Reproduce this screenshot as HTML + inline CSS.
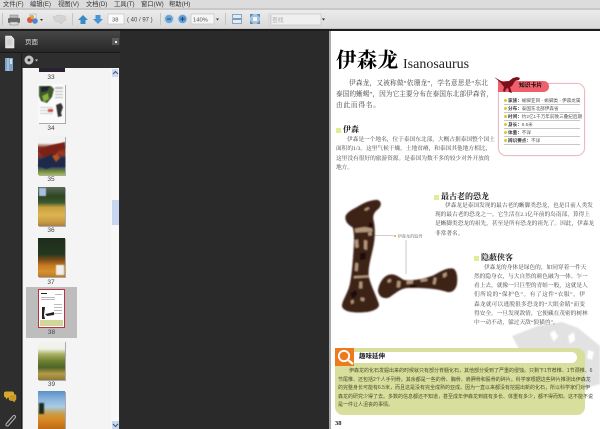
<!DOCTYPE html>
<html lang="zh"><head><meta charset="utf-8"><title>伊森龙</title>
<style>
html,body{margin:0;padding:0;background:#2a2a2a}
#r{position:relative;width:600px;height:429px;overflow:hidden;background:#2a2a2a;font-family:"Liberation Sans","Noto Sans CJK SC",sans-serif}
#r div,#r svg{position:absolute}
.m{top:0;height:9px;line-height:9px;font-size:6.3px;color:#333;white-space:nowrap;filter:blur(.3px)}
.t{white-space:nowrap;text-align:justify;text-align-last:justify;font-family:"Liberation Serif","Noto Serif CJK SC",serif;color:#444;filter:blur(.3px)}
.b{font-size:5.7px;height:8px;line-height:8px}
.h{font-family:"Liberation Serif","Noto Serif CJK SC",serif;font-weight:700;color:#222;white-space:nowrap;font-size:8px;line-height:10px;filter:blur(.25px)}
.q{width:5px;height:5px;background:#e2ec96}
.n{left:23px;width:56px;text-align:center;font-size:6.5px;line-height:8px;color:#444;filter:blur(.25px)}
.th{left:38px;width:27px;height:39px;box-shadow:1px 1px 0 #aaa;filter:blur(.35px)}
.c{left:504px;width:76px;height:7px;line-height:7px;font-size:4.6px;color:#555;white-space:nowrap;border-bottom:1px solid #c8c8c8;filter:blur(.25px)}
.c b{color:#333}.c i{display:inline-block;width:2.5px;height:2.5px;border-radius:2px;background:#d8c830;margin:0 1.5px 1px 0;vertical-align:middle}
.g{left:338px;width:240px;height:8px;line-height:8px;font-size:5px;color:#484c2c;white-space:nowrap;text-align:justify;text-align-last:justify;filter:blur(.3px)}
</style></head><body><div id="r">

<!-- menu + toolbar -->
<div style="left:0;top:0;width:600px;height:9px;background:#dcdcdc"></div>
<div style="left:0;top:8px;width:600px;height:2px;background:#c8c8c8"></div>
<div style="left:0;top:10px;width:600px;height:18px;background:linear-gradient(#ececec,#dadada)"></div>
<div style="left:0;top:28px;width:600px;height:1px;background:#c4c4c4"></div>
<div style="left:0;top:29px;width:600px;height:2px;background:#1c1c1c"></div>
<div class="m" style="left:3px">文件(F)</div><div class="m" style="left:30px">编辑(E)</div><div class="m" style="left:58px">视图(V)</div><div class="m" style="left:86px">文档(D)</div><div class="m" style="left:114px">工具(T)</div><div class="m" style="left:141px">窗口(W)</div><div class="m" style="left:169px">帮助(H)</div>

<svg style="left:0;top:10px;filter:blur(.3px)" width="340" height="18" viewBox="0 0 340 18">
 <g fill="#c4c4c4"><rect x="2" y="3" width="1" height="12"/><rect x="72" y="3" width="1" height="12"/><rect x="160" y="3" width="1" height="12"/><rect x="225" y="3" width="1" height="12"/></g>
 <rect x="10" y="5" width="8" height="3" fill="#bbb" stroke="#777" stroke-width=".5"/><rect x="8" y="8" width="12" height="5" rx="1" fill="#6a6a6a"/><rect x="10" y="12" width="8" height="3" fill="#ddd" stroke="#777" stroke-width=".5"/>
 <rect x="30" y="4" width="6" height="7" fill="#eee" stroke="#999" stroke-width=".5"/><circle cx="30" cy="10" r="3" fill="#d9553f"/><circle cx="35" cy="11" r="2.8" fill="#4e86c8"/><circle cx="32" cy="7" r="2" fill="#e8a13c"/><path d="M40 9h3l-1.500 2z" fill="#333"/>
 <path d="M53 7l5-2 7 1 1 4-4 2v2l-3-2-4-1z" fill="#d4d4d4" stroke="#c2c2c2" stroke-width=".6"/>
 <path d="M83 5l5 5h-2.500v4h-5v-4H78z" fill="#3a8ac8"/><path d="M98 14l-5-5h2.500V5h5v4h2.500z" fill="#4a95d2"/>
 <rect x="108" y="4" width="16" height="10" fill="#fafafa" stroke="#c4c4c4" stroke-width=".7"/>
 <text x="112" y="11.500" font-size="5.800" fill="#555" font-family="Liberation Sans">38</text>
 <text x="127" y="11.500" font-size="6" fill="#444" font-family="Liberation Sans">( 40 / 97 )</text>
 <circle cx="169" cy="9" r="4.500" fill="#6aa5da" stroke="#c4d8ea"/><rect x="167" y="8.500" width="4" height="1" fill="#345"/>
 <circle cx="182.500" cy="9" r="4.500" fill="#5a9ad6" stroke="#c4d8ea"/><rect x="180.500" y="8.500" width="4" height="1" fill="#345"/><rect x="182" y="7" width="1" height="4" fill="#345"/>
 <rect x="191" y="4" width="23" height="10" fill="#f6f6f6" stroke="#c4c4c4" stroke-width=".7"/>
 <text x="193" y="11.500" font-size="5.800" fill="#555" font-family="Liberation Sans">140%</text>
 <path d="M216 8.500h3l-1.500 2z" fill="#333"/>
 <rect x="232.500" y="4.500" width="9" height="9" fill="#e2eaf2" stroke="#86a6c4"/><rect x="233" y="8" width="8" height="2" fill="#7a9cc0"/>
 <rect x="250" y="4" width="10" height="10" fill="#a8c4dc"/><path d="M250 4l3.500 0-3.500 3.500zM260 4l-3.500 0 3.500 3.500zM250 14l3.500 0-3.500-3.500zM260 14l-3.500 0 3.500-3.500z" fill="#5a8cb8"/><rect x="253" y="7" width="4" height="4" fill="#f2f6fa"/>
 <rect x="269" y="4" width="52" height="11" fill="#efefef" stroke="#c4c4c4" stroke-width=".7"/><rect x="270" y="5" width="1.500" height="9" fill="#cfcfcf"/>
 <text x="272" y="12" font-size="5.800" fill="#aaa" font-family="Noto Sans CJK SC">查找</text>
 <path d="M322 8.500h3l-1.500 2z" fill="#222"/>
</svg>

<!-- left rail and panel -->
<div style="left:0;top:31px;width:120px;height:398px;background:#2e2e2e"></div>
<div style="left:0;top:31px;width:120px;height:21px;background:linear-gradient(#454545,#282828)"></div>
<div style="left:0;top:52px;width:120px;height:1px;background:#181818"></div>
<div style="left:21px;top:53px;width:1px;height:376px;background:#1a1a1a"></div>
<div style="left:25px;top:38px;font-size:6.500px;line-height:9px;color:#ddd;filter:blur(.25px)">页面</div>
<div style="left:112px;top:38px;width:7px;height:7px;background:#5a5a5a"></div>
<div style="left:115px;top:41px;width:2px;height:2px;background:#eee"></div>
<svg style="left:0;top:31px;filter:blur(.3px)" width="40" height="40" viewBox="0 0 40 40">
 <path d="M5.500 5h6l2.500 3v9h-8.500z" fill="#dcdcdc" stroke="#fff" stroke-width=".5"/><path d="M7 9h5M7 11h5M7 13h5" stroke="#aaa" stroke-width=".6"/>
 <path d="M5 27h8v13H5z" fill="#7fa4c8"/><path d="M8 27v13" stroke="#c0d6ea"/><path d="M10 28h2v5h-2z" fill="#cfe0ef"/>
 <circle cx="29" cy="29" r="4.500" fill="#c4c4c4"/><circle cx="29" cy="29" r="1.500" fill="#333"/><path d="M35 28.500h3l-1.500 2z" fill="#ccc"/>
</svg>
<svg style="left:0;top:388px;filter:blur(.3px)" width="24" height="41" viewBox="0 0 24 41">
 <path d="M4 5c0-1 1-1.500 2-1.500h6c1 0 2 .5 2 1.500v3c0 1-1 1.500-2 1.500H8l-2 2v-2c-1 0-2-.5-2-1.500z" fill="#d6a92c"/>
 <path d="M9 8c0-1 1-1.500 2-1.500h3.500c1 0 1.500 .5 1.500 1.500v3c0 1-.5 1.500-1.500 1.500v1.500l-2-1.500H11c-1 0-2-.5-2-1.500z" fill="#c89a20" stroke="#e8c860" stroke-width=".4"/>
 <path d="M7 35l6-7c1.500-1.500 3.500 .5 2 2l-6.500 7.500c-1 1-3 .5-2.500-1.500l6-7" fill="none" stroke="#b0b0b0" stroke-width="1"/>
</svg>

<!-- thumbnails list -->
<div style="left:22px;top:68px;width:1px;height:361px;background:#777"></div>
<div style="left:23px;top:68px;width:96px;height:361px;background:#f4f4f4"></div>
<div style="left:111px;top:68px;width:8px;height:361px;background:#f8f8f8"></div>
<div style="left:112px;top:69px;width:6px;height:8px;background:#cfdcf2"></div>
<div style="left:112px;top:200px;width:7px;height:25px;background:#c8d6f0"></div>
<div style="left:112px;top:421px;width:7px;height:8px;background:#c8d6ee"></div>
<svg style="left:112px;top:69px" width="7" height="8"><path d="M1 5l2.500-2.500L6 5" fill="none" stroke="#456" stroke-width="1"/></svg>
<svg style="left:112px;top:421px" width="7" height="8"><path d="M1 3l2.500 2.500L6 3" fill="none" stroke="#456" stroke-width="1"/></svg>
<div style="left:39px;top:68px;width:26px;height:4px;background:#2a2230"></div>
<div class="n" style="top:74px">33</div>

<div class="th" style="top:84px;background:#fafafa"></div>
<svg style="left:38px;top:84px;filter:blur(.4px)" width="27" height="39"><path d="M1 2h12l3 3-2 8-5 6-6-2-2-5z" fill="#3d5a2a"/><path d="M3 3l9-1-3 5-6 1z" fill="#223"/><path d="M4 12l6-3 1 6-5 3z" fill="#8ab040"/><path d="M17 3h8v2h-8zM17 7h8v1h-8zM17 10h8v1h-8zM17 13h8v1h-8z" fill="#bbb"/><path d="M2 23h13v1H2zM2 26h13v1H2zM2 29h13v1H2z" fill="#ccc"/><rect x="10" y="25" width="5" height="3" fill="#d05050"/><path d="M18 21l5-2 2 4-2 6 1 3-4 1z" fill="#333"/></svg>
<div class="n" style="top:125px">34</div>

<div class="th" style="top:136px;background:linear-gradient(#f2f2f2 0 18%,#7a2a1a 30%,#a03a20 45%,#2c3350 62%,#303a60 78%,#82a040 94%,#a4bc50)"></div>
<svg style="left:38px;top:136px;filter:blur(.5px)" width="27" height="39"><path d="M0 15l10-5 8-2 9-2v6l-7 3-6 8-6 1z" fill="#7a2218"/><path d="M6 22l8-4 6 4 7-1v10H14l-6 2-8-3 2-6z" fill="#1f2a4a"/><path d="M14 20l5-2 3 4-4 4z" fill="#b4531f"/></svg>
<div class="n" style="top:176px">35</div>

<div class="th" style="top:187px;background:linear-gradient(#5a6a58 0,#2d4420 24%,#3c5830 40%,#c8a040 52%,#dcb450 72%,#c89a40 90%,#a88040)"></div>
<div style="left:39px;top:188px;width:7px;height:8px;background:#a9bfe4;filter:blur(.5px)"></div>
<div class="n" style="top:227px">36</div>

<div class="th" style="top:238px;background:linear-gradient(#1e2c1c 0,#24381e 42%,#7a4a18 56%,#c47a20 70%,#d89030 86%,#b87a28)"></div>
<div style="left:56px;top:265px;width:8px;height:10px;background:#eee;filter:blur(.4px)"></div>
<div class="n" style="top:279px">37</div>

<div style="left:26px;top:287px;width:51px;height:51px;background:#bdbdbd"></div>
<div class="th" style="top:289px;width:25px;height:37px;background:#fff;border:1px solid #c03040;box-shadow:none"></div>
<svg style="left:39px;top:290px;filter:blur(.35px)" width="25" height="37"><path d="M2 3h6v1H2z" fill="#222"/><path d="M2 7h14v1H2zM2 9h14v1H2zM16 4h7v1h-7zM15 14h8v1h-8zM15 17h8v1h-8zM15 20h8v1h-8zM15 23h8v1h-8z" fill="#bbb"/><path d="M3 17h3l-1 8 1 4H3zM6 24l5-1 4-1v3l-7 1z" fill="#222"/><rect x="1" y="30" width="23" height="6" fill="#cfd898"/></svg>
<div class="n" style="top:329px;left:26px;width:51px">38</div>

<div class="th" style="top:341px;background:linear-gradient(#f4f4f0 0,#f0f0e8 20%,#a8b060 34%,#6a7f30 52%,#4e6428 68%,#b89a48 84%,#8a7a38)"></div>
<div class="n" style="top:381px;left:26px;width:51px">39</div>

<div class="th" style="top:391px;height:38px;background:linear-gradient(#5a90c8 0,#8ab4dc 22%,#a8cce4 42%,#c8a050 58%,#d88820 76%,#c06a18)"></div>
<div style="left:39px;top:403px;width:5px;height:11px;background:#1c2a1c;filter:blur(.7px)"></div>

<!-- page -->
<div style="left:329px;top:31px;width:2px;height:398px;background:#aaa"></div>
<div style="left:331px;top:31px;width:269px;height:398px;background:#fff"></div>

<!-- watermark -->
<svg style="left:500px;top:316px;filter:blur(.8px)" width="100" height="80" viewBox="0 0 100 80">
 <path d="M12 20L38 10 62 6 78 12 100 30V68L86 72 60 55 20 35z" fill="#e2e2e2"/>
 <path d="M50 18l4-4 4 6-4 6zM68 20l6-4 1 8-5 4zM70 40l6-4 4 6-6 4zM88 34l6 2-2 8-5-2zM52 34l6-2 2 6-6 2z" fill="#fff"/>
</svg>

<div class="h" style="left:336px;top:48px;font-size:20.500px;line-height:26px;color:#000;letter-spacing:.3px">伊森龙</div>
<div style="left:403px;top:56px;font-family:'Liberation Serif',serif;font-size:14px;line-height:18px;color:#222;white-space:nowrap;filter:blur(.25px)">Isanosaurus</div>

<div class="t" style="left:336px;top:80px;width:152px;font-size:6.700px;line-height:8px;height:8px;padding-left:13px;box-sizing:border-box">伊森龙，又被称做“依珊龙”，学名意思是“东北</div>
<div class="t" style="left:336px;top:91px;width:152px;font-size:6.700px;line-height:8px;height:8px">泰国的蜥蜴”，因为它主要分布在泰国东北部伊森省，</div>
<div class="t" style="left:336px;top:102px;width:44px;font-size:6.700px;line-height:8px;height:8px">由此而得名。</div>

<div class="q" style="left:336px;top:128px"></div>
<div class="h" style="left:343px;top:125px">伊森</div>
<div class="t b" style="left:336px;top:136px;width:152px;padding-left:11px;box-sizing:border-box">伊森是一个地名，位于泰国东北部，大概占据泰国整个国土</div>
<div class="t b" style="left:336px;top:145px;width:152px">面积的1/3。这里气候干燥，土地贫瘠，和泰国其他地方相比，</div>
<div class="t b" style="left:336px;top:155px;width:152px">这里没有很好的旅游资源。是泰国为数不多的较少对外开放的</div>
<div class="t b" style="left:336px;top:164px;width:15px">地方。</div>

<!-- card -->
<div style="left:498px;top:83px;width:85px;height:71px;border:1px solid #e8bcc0;border-radius:8px;box-shadow:0 0 1px #e8bcc0"></div>
<div style="left:498px;top:81px;width:51px;height:11px;background:#f0606c;border-radius:0 5px 5px 0"></div>
<svg style="left:493px;top:76px;filter:blur(.25px)" width="30" height="18" viewBox="0 0 30 18"><path d="M1 1l9 5 6-1 4-3 4-1 3 1-1 2-4 1-3 5-2 1 2 6-3-1-1-4-2 1-1 3-2-1 1-4-3-4z" fill="#7c101a"/></svg>
<div style="left:519px;top:82px;font-size:5.800px;font-weight:700;line-height:9px;color:#111;white-space:nowrap;filter:blur(.25px)">知识卡片</div>
<div class="c" style="top:97px"><i></i><b>家族：</b>蜥脚亚目 - 蜥脚类 - 伊森龙属</div>
<div class="c" style="top:105px"><i></i><b>分布：</b>泰国东北部伊森省</div>
<div class="c" style="top:113px"><i></i><b>时间：</b>约2亿1千万年前晚三叠纪后期</div>
<div class="c" style="top:121px"><i></i><b>身长：</b>6.5米</div>
<div class="c" style="top:129px"><i></i><b>体重：</b>不详</div>
<div class="c" style="top:137px"><i></i><b>辨识要点：</b>不详</div>

<!-- 最古老 -->
<div class="q" style="left:434px;top:195px"></div>
<div class="h" style="left:441px;top:192px">最古老的恐龙</div>
<div class="t b" style="left:435px;top:202px;width:150px;padding-left:10px;box-sizing:border-box">伊森龙是泰国发现的最古老的蜥脚类恐龙，也是目前人类发</div>
<div class="t b" style="left:435px;top:211px;width:150px">现的最古老的恐龙之一。它生活在2.1亿年前的岛南部，算得上</div>
<div class="t b" style="left:435px;top:220px;width:150px">是蜥脚类恐龙的祖先，甚至是所有恐龙的祖先了。因此，伊森龙</div>
<div class="t b" style="left:435px;top:230px;width:25px">非常著名。</div>

<!-- 隐蔽 -->
<div class="q" style="left:474px;top:256px"></div>
<div class="h" style="left:481px;top:253px">隐蔽侠客</div>
<div class="t b" style="left:474px;top:264px;width:111px;padding-left:10px;box-sizing:border-box">伊森龙的身体是绿色的，如同穿着一件天</div>
<div class="t b" style="left:474px;top:273px;width:111px">然的隐身衣，与大自然的颜色融为一体。乍一</div>
<div class="t b" style="left:474px;top:282px;width:111px">看上去，就像一只巨型的青蛙一般，这就是人</div>
<div class="t b" style="left:474px;top:291px;width:111px">们所说的“保护色”。有了这件“衣服”，伊</div>
<div class="t b" style="left:474px;top:301px;width:111px">森龙就可以逃脱很多恐龙的“大眼金睛”而变</div>
<div class="t b" style="left:474px;top:310px;width:111px">得安全。一旦发现敌情，它便藏在茂密的树林</div>
<div class="t b" style="left:474px;top:319px;width:84px">中一动不动，躲过天敌“狼猫兽”。</div>

<!-- bones -->
<svg style="left:340px;top:190px" width="130" height="150" viewBox="0 0 390 450">
 <defs><filter id="f" x="-10%" y="-10%" width="120%" height="120%"><feGaussianBlur stdDeviation="2.200"/></filter></defs>
 <path d="M103 137H160M198 150V252" stroke="#b0b0b0" stroke-width="2" fill="none"/>
 <circle cx="165" cy="138" r="3" fill="#e8962a"/>
 <g filter="url(#f)">
  <path d="M58 47C75 36 100 28 114 30C124 34 126 46 116 56C106 64 98 72 100 88C106 110 106 140 100 170C94 200 84 230 86 256C90 282 106 310 116 340C122 356 96 366 68 367C40 369 12 366 6 350C4 335 24 310 30 280C36 250 38 215 40 190C42 160 44 130 38 112C28 106 16 98 16 82C18 66 40 58 58 47Z" fill="#3c2016"/>
  <path d="M114 304C114 286 128 258 148 254C164 250 178 262 192 270C220 272 250 268 280 256C300 246 320 232 340 236C352 242 354 268 350 286C344 304 332 310 316 304C290 296 240 292 200 294C180 296 164 312 148 322C132 328 118 322 114 304Z" fill="#3c2016"/>
  <g fill="#b4967a">
   <path d="M44 116l30-5 22 4 2 10-52 3zM44 150l10-2 2 24-10 2zM72 150l10 2-1 28-9-3zM42 258l44-2 1 6-46 3zM46 218l9 2-2 24-9-2zM58 275l9 0 0 20-10 0zM84 128l10-3 2 10-10 3zM72 58l12-7 5 5-12 7z"/>
   <path d="M172 272l10 2-2 18-10 0zM200 272l20-1-2 10-18 2zM242 268l20-2 0 7-20 3zM282 262l8 2-4 20-8-2zM308 252l12-6 0 12-10 6zM142 270l10-4 2 9-10 4z"/>
   <path d="M32 332l8-3 2 9-8 5zM62 322l12 2-2 10-10-2z"/>
  </g>
  <g fill="#1a0d08"><path d="M60 190l18-2-2 20-16 2zM30 310l18-10 4 14-14 12zM88 95l10 8-4 12-8-4zM210 285l20 0 0 6-20 2z"/></g>
 </g>
 <text x="173" y="142" font-size="12.500" fill="#666" font-family="Noto Serif CJK SC">伊森龙的股骨</text>
</svg>

<!-- green box -->
<div style="left:335px;top:348px;width:250px;height:67px;background:#d8df9c;border-radius:0 8px 8px 8px"></div>
<div style="left:354px;top:352px;width:223px;height:11px;background:#fff;border-radius:0 6px 6px 0"></div>
<div style="left:335px;top:348px;width:19px;height:18px;background:#ee7a1e"></div>
<svg style="left:335px;top:348px" width="21" height="20"><circle cx="9" cy="8" r="5.200" fill="none" stroke="#fff" stroke-width="1.800"/><path d="M13 12l5 4" stroke="#fff" stroke-width="2.200"/></svg>
<div style="left:359px;top:352px;font-size:6.500px;font-weight:700;line-height:10px;color:#222;white-space:nowrap;filter:blur(.25px)">趣味延伸</div>
<div class="g" style="top:367px;padding-left:11px;box-sizing:border-box">伊森龙的化石发掘出来的时候就只有部分脊髓化石，其他部分受到了严重的侵蚀。只剩下1节荐椎、1节颈椎、6</div>
<div class="g" style="top:376px">节尾椎、还包括2个人手列骨。其余都是一些的骨、胸骨、肩胛骨和股骨的碎片。科学家根据这些碎片推测出伊森龙</div>
<div class="g" style="top:384px">的完整身长可能有6.5米，而且这是没有完全成熟的亚成。因为一直以来都没有挖掘出新的化石，所以科学家们对伊</div>
<div class="g" style="top:393px">森龙的研究少得了去。多数的信息都还不知道，甚至成年伊森龙到底有多长、体重有多少，都不得而知。这不能不说</div>
<div class="g" style="top:401px;width:55px">是一件让人沮丧的事情。</div>

<div style="left:335px;top:420px;font-family:'Liberation Serif',serif;font-size:6.500px;font-weight:700;line-height:8px;color:#222">38</div>
</div></body></html>
